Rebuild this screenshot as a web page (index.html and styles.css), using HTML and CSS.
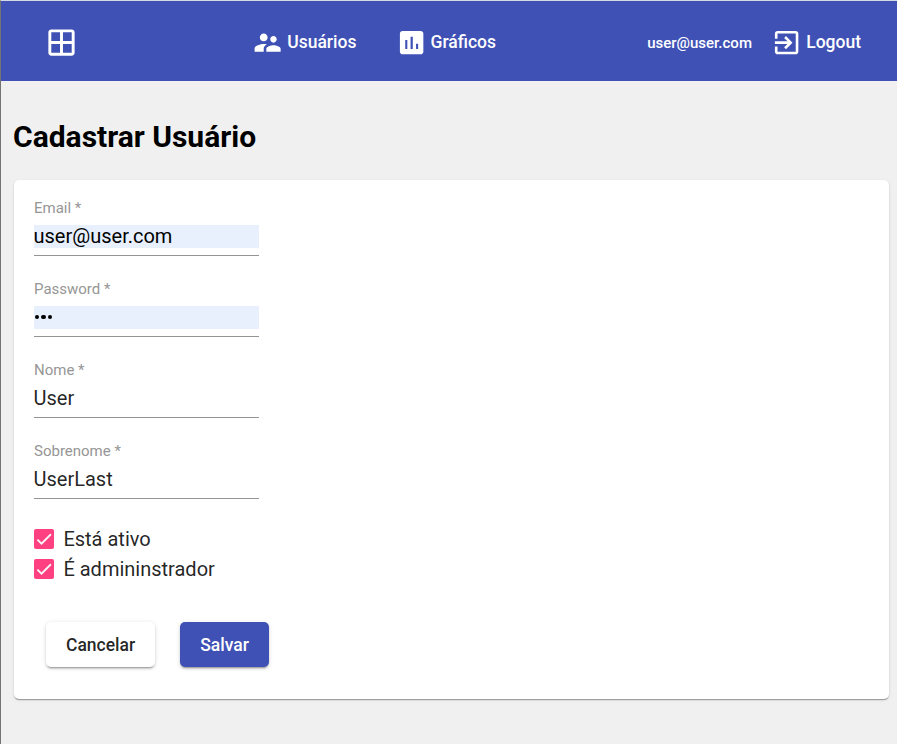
FILE: index.html
```html
<!DOCTYPE html>
<html lang="pt-BR">
<head>
<meta charset="utf-8">
<title>Cadastrar Usuário</title>
<link rel="stylesheet" href="styles.css">
</head>
<body>
<header class="toolbar">
  <a class="home" aria-label="Início"><svg class="icon-home" viewBox="0 0 24 24"><path d="M19 3H5c-1.100 0-2 .9-2 2v14c0 1.100.9 2 2 2h14c1.100 0 2-.9 2-2V5c0-1.100-.9-2-2-2zM11 19H5v-6h6zM11 11H5V5h6zM19 19h-6v-6h6zM19 11h-6V5h6z"/></svg></a>
  <nav class="nav">
    <a class="link"><svg class="icon" viewBox="0 0 24 24"><path d="M16.500 12c1.380 0 2.490-1.120 2.490-2.500S17.880 7 16.500 7 14 8.120 14 9.500s1.120 2.500 2.500 2.500zM9 11c1.660 0 2.990-1.340 2.990-3S10.660 5 9 5 6 6.340 6 8s1.340 3 3 3zm7.500 3c-1.830 0-5.500.92-5.500 2.750V19h11v-2.250c0-1.830-3.670-2.750-5.500-2.750zM9 13c-2.330 0-7 1.170-7 3.500V19h7v-2.250c0-.85.33-2.340 2.370-3.470C10.500 13.100 9.660 13 9 13z"/></svg><span>Usuários</span></a>
    <a class="link link-charts"><svg class="icon" viewBox="0 0 24 24"><path d="M19 3H5c-1.100 0-2 .9-2 2v14c0 1.100.9 2 2 2h14c1.100 0 2-.9 2-2V5c0-1.100-.9-2-2-2zM8.700 16.800H7.100V10h1.600zM12.900 16.800h-1.700V7.400h1.700zM17 16.800h-1.600v-4H17z"/></svg><span>Gráficos</span></a>
  </nav>
  <div class="account">
    <span class="account-email">user@user.com</span>
    <a class="link"><svg class="icon" viewBox="0 0 24 24"><path d="M10.090 15.590L11.500 17l5-5-5-5-1.410 1.410L12.670 11H3v2h9.670l-2.580 2.590zM19 3H5c-1.110 0-2 .9-2 2v4h2V5h14v14H5v-4H3v4c0 1.100.89 2 2 2h14c1.100 0 2-.9 2-2V5c0-1.100-.9-2-2-2z"/></svg><span>Logout</span></a>
  </div>
</header>
<main class="content">
  <h1 class="title">Cadastrar Usuário</h1>
  <form class="card">
    <label class="field"><span class="label">Email *</span><input class="input filled" type="text" value="user@user.com"></label>
    <label class="field"><span class="label">Password *</span><span class="input filled password"><i></i><i></i><i></i></span></label>
    <label class="field"><span class="label">Nome *</span><input class="input" type="text" value="User"></label>
    <label class="field"><span class="label">Sobrenome *</span><input class="input" type="text" value="UserLast"></label>
    <div class="checks">
      <label class="check"><svg class="box" viewBox="0 0 24 24"><path d="M4.100 12.700L9 17.600 20.300 6.300"/></svg><span>Está ativo</span></label>
      <label class="check"><svg class="box" viewBox="0 0 24 24"><path d="M4.100 12.700L9 17.600 20.300 6.300"/></svg><span>É admininstrador</span></label>
    </div>
    <div class="actions">
      <button class="button" type="button">Cancelar</button>
      <button class="button primary" type="button">Salvar</button>
    </div>
  </form>
</main>
</body>
</html>
```
FILE: styles.css
```css
* { box-sizing: border-box; }
body {
  margin: 0;
  min-height: 744px;
  border-left: 1px solid #737373;
  border-top: 1px solid #d5d9e4;
  background: #f0f0f0;
  font-family: Roboto, "Liberation Sans", sans-serif;
  color: rgba(0, 0, 0, .87);
  overflow: hidden;
}
svg { display: block; flex: none; }
.toolbar {
  display: flex;
  align-items: center;
  height: 80px;
  padding: 4px 36px 0 42.6px;
  background: #3f51b5;
  color: #fff;
  font-size: 17.5px;
  font-weight: 500;
}
.home { width: 208.4px; padding-bottom: 1px; }
.icon-home { width: 35px; height: 35px; fill: currentColor; }
.icon { width: 31.25px; height: 31.25px; fill: currentColor; }
.nav { display: flex; gap: 39.6px; }
.link { display: flex; align-items: center; gap: 4px; }
.link-charts { gap: 3.2px; }
.link span { position: relative; top: -1px; }
.account { display: flex; align-items: center; gap: 19px; margin-left: auto; }
.account-email { font-size: 15px; }
.content { padding: 36px 8px 0 13px; }
.title {
  margin: 0 0 23px -1px;
  font-size: 30px;
  line-height: 40px;
  font-weight: 700;
  color: #000;
}
.card {
  height: 519px;
  padding: 20px;
  border-radius: 5px;
  background: #fff;
  box-shadow: 0 2px 1px -1px rgba(0, 0, 0, .2), 0 1px 1px rgba(0, 0, 0, .14), 0 1px 3px rgba(0, 0, 0, .12);
}
.field {
  display: block;
  width: 225px;
  height: 56px;
  margin-bottom: 25px;
  border-bottom: 1px solid #949494;
}
.label {
  display: block;
  height: 25px;
  font-size: 15px;
  line-height: 17px;
  color: #969696;
}
.input {
  display: block;
  width: 100%;
  height: 23px;
  padding: 0;
  border: 0;
  background: transparent;
  font: 400 20px/23px Roboto, "Liberation Sans", sans-serif;
  color: rgba(0, 0, 0, .87);
  text-indent: -.5px;
}
.filled { background: #e8f0fe; color: #000; }
.password { display: flex; align-items: center; gap: 2.500px; padding: 0 0 1px .6px; }
.password i { width: 4.300px; height: 4.300px; border-radius: 50%; background: #000; }
.checks { margin-top: 25px; }
.check { display: flex; align-items: center; gap: 9.4px; height: 30px; font-size: 20px; }
.box {
  width: 20px;
  height: 20px;
  border-radius: 2px;
  background: #ff4081;
  fill: none;
  stroke: #fafafa;
  stroke-width: 2.130;
}
.actions { display: flex; gap: 25px; margin: 38px 0 0 12px; }
.button {
  height: 45px;
  padding: 1px 20px 0;
  border: 0;
  border-radius: 5px;
  background: #fff;
  color: rgba(0, 0, 0, .87);
  font: 500 17.5px/44px Roboto, "Liberation Sans", sans-serif;
  box-shadow: 0 3px 1px -2px rgba(0, 0, 0, .2), 0 2px 2px rgba(0, 0, 0, .14), 0 1px 5px rgba(0, 0, 0, .12);
}
.primary { background: #3f51b5; color: #fff; }
```
